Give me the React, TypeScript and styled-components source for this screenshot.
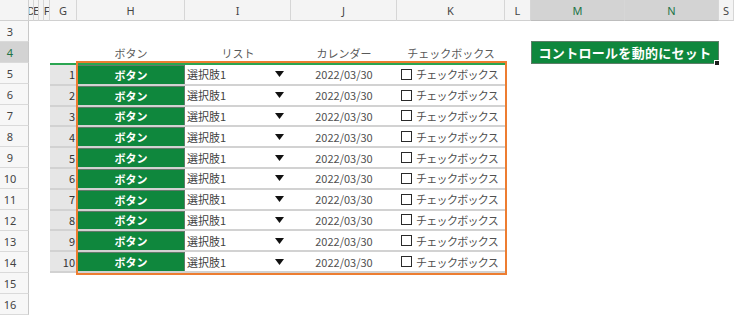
import styled, { createGlobalStyle } from "styled-components";

const GlobalStyle = createGlobalStyle`
  html, body {
    margin: 0;
    padding: 0;
    background: #ffffff;
  }
  body {
    font-family: "Noto Sans CJK JP", "Noto Sans", sans-serif;
    overflow: hidden;
  }
`;

const columns = [
  { key: "D", w: 5 },
  { key: "E", w: 5 },
  { key: "", w: 5 },
  { key: "F", w: 6 },
  { key: "G", w: 27 },
  { key: "H", w: 108 },
  { key: "I", w: 106 },
  { key: "J", w: 106 },
  { key: "K", w: 108 },
  { key: "L", w: 26 },
  { key: "M", w: 94, sel: true },
  { key: "N", w: 94, sel: true },
  { key: "S", w: 0 },
];

const template =
  "29px " +
  columns.map((c) => (c.w ? `${c.w}px` : "1fr")).join(" ");

const Sheet = styled.div`
  display: grid;
  grid-template-columns: ${template};
  grid-auto-rows: 21px;
  width: 734px;
  height: 318px;
  overflow: hidden;
`;

const Corner = styled.div`
  background: #f4f4f4;
  border-bottom: 1px solid #d0d0d0;
  border-right: 1px solid #d0d0d0;
`;

const ColHead = styled.div<{ $sel?: boolean }>`
  display: flex;
  align-items: center;
  justify-content: center;
  overflow: hidden;
  background: ${(p) => (p.$sel ? "#d3d3d3" : "#f4f4f4")};
  color: ${(p) => (p.$sel ? "#217346" : "#444444")};
  border-bottom: 1px solid ${(p) => (p.$sel ? "#bdbdbd" : "#d0d0d0")};
  border-right: 1px solid #d6d6d6;
  font-family: "Noto Sans", sans-serif;
  font-size: 11px;
  white-space: nowrap;
`;

const RowHead = styled.div<{ $row: number; $sel?: boolean }>`
  grid-column: 1;
  grid-row: ${(p) => p.$row};
  display: flex;
  align-items: center;
  justify-content: center;
  padding-right: 8px;
  background: ${(p) => (p.$sel ? "#d3d3d3" : "#f7f7f7")};
  color: ${(p) => (p.$sel ? "#217346" : "#444444")};
  border-bottom: 1px solid #dadada;
  border-right: 1px solid #c8c8c8;
  font-family: "Noto Sans", sans-serif;
  font-size: 11px;
`;

const HeadLabel = styled.div<{ $col: number }>`
  grid-column: ${(p) => p.$col};
  grid-row: 3;
  display: flex;
  align-items: center;
  justify-content: center;
  color: #595959;
  font-size: 11px;
  white-space: nowrap;
`;

const SetButton = styled.div`
  grid-column: 12 / 14;
  grid-row: 3;
  position: relative;
  display: flex;
  align-items: center;
  justify-content: center;
  margin: -1px 0 -1px 0;
  background: #0f873d;
  border: 1px solid #5d7d68;
  color: #ffffff;
  font-weight: 700;
  font-size: 13px;
  letter-spacing: 0.3px;
  white-space: nowrap;
`;

const Handle = styled.span`
  position: absolute;
  right: -2px;
  bottom: -3px;
  width: 4px;
  height: 4px;
  background: #1e1e1e;
  border: 1px solid #ffffff;
`;

const Table = styled.div`
  grid-column: 6 / 11;
  grid-row: 4 / 14;
  position: relative;
  display: flex;
  flex-direction: column;
  border-top: 2px solid #2aa551;

  &::after {
    content: "";
    position: absolute;
    left: 26px;
    top: -4px;
    right: -2px;
    bottom: -2px;
    border: 2px solid #ed7d31;
    pointer-events: none;
  }
`;

const Row = styled.div`
  flex: 1;
  display: grid;
  grid-template-columns: 27px 108px 106px 106px 108px;
  border-bottom: 2px solid #d2d2d2;
  font-size: 11px;
  color: #404040;
  min-height: 0;
`;

const NumCell = styled.div`
  display: flex;
  align-items: center;
  justify-content: flex-end;
  padding-right: 2px;
  background: #e6e6e6;
  color: #333333;
`;

const ButtonCell = styled.div`
  display: flex;
  align-items: center;
  justify-content: center;
  background: #0f873d;
  border: 1px solid #627a6a;
  border-bottom: none;
  color: #ffffff;
  font-weight: 700;
`;

const ListCell = styled.div`
  display: flex;
  align-items: center;
  justify-content: space-between;
  padding: 0 7px 0 2px;
`;

const DateCell = styled.div`
  display: flex;
  align-items: center;
  justify-content: center;
  color: #505050;
`;

const CheckCell = styled.div`
  display: flex;
  align-items: center;
  gap: 4px;
  padding-left: 4px;
  white-space: nowrap;
  color: #505050;
  letter-spacing: -0.7px;
`;

const Box = styled.span`
  width: 9px;
  height: 9px;
  border: 1px solid #2a2a2a;
  flex: none;
`;

function Arrow() {
  return (
    <svg width="9" height="6" viewBox="0 0 9 6">
      <polygon points="0,0 9,0 4.5,6" fill="#111" />
    </svg>
  );
}

function App() {
  const rows = Array.from({ length: 14 }, (_, i) => i + 3);
  const items = Array.from({ length: 10 }, (_, i) => i + 1);
  return (
    <>
      <GlobalStyle />
      <Sheet>
        <Corner />
        {columns.map((c, i) => (
          <ColHead key={i} $sel={c.sel}>
            {c.key}
          </ColHead>
        ))}
        {rows.map((r) => (
          <RowHead key={r} $row={r - 1} $sel={r === 4}>
            {r}
          </RowHead>
        ))}
        <HeadLabel $col={7}>ボタン</HeadLabel>
        <HeadLabel $col={8}>リスト</HeadLabel>
        <HeadLabel $col={9}>カレンダー</HeadLabel>
        <HeadLabel $col={10}>チェックボックス</HeadLabel>
        <SetButton>
          コントロールを動的にセット
          <Handle />
        </SetButton>
        <Table>
          {items.map((n) => (
            <Row key={n}>
              <NumCell>{n}</NumCell>
              <ButtonCell>ボタン</ButtonCell>
              <ListCell>
                <span>選択肢1</span>
                <Arrow />
              </ListCell>
              <DateCell>2022/03/30</DateCell>
              <CheckCell>
                <Box />
                チェックボックス
              </CheckCell>
            </Row>
          ))}
        </Table>
      </Sheet>
    </>
  );
}

export default App;
